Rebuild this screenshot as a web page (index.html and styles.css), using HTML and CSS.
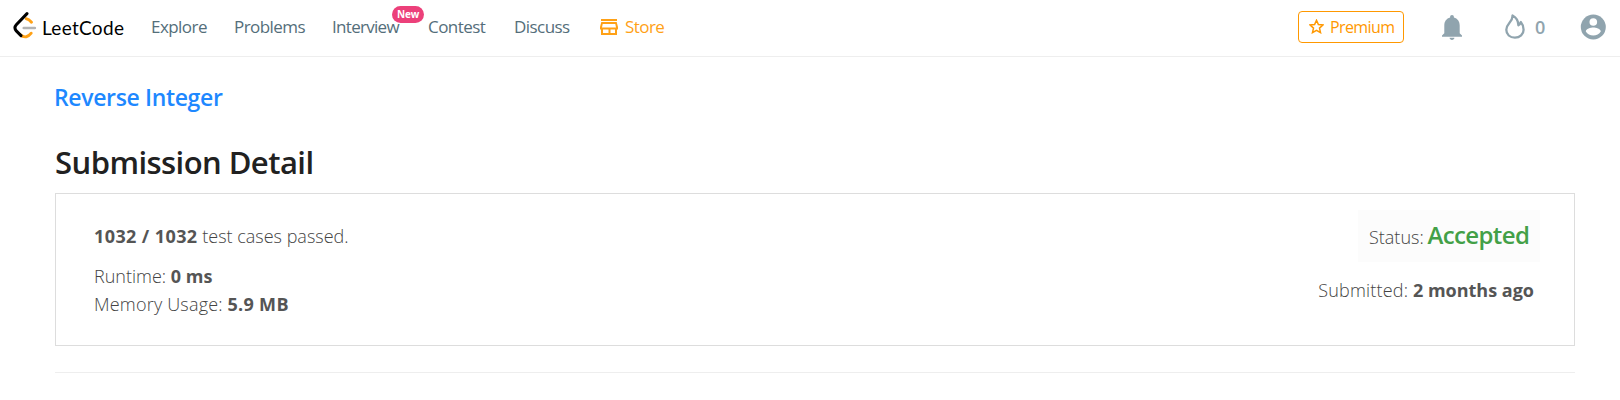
FILE: index.html
```html
<!DOCTYPE html>
<html lang="en">
<head>
<meta charset="utf-8">
<title>Submission Detail - LeetCode</title>
<link rel="stylesheet" href="styles.css">
</head>
<body>
<header class="navbar">
  <a class="brand">
    <svg class="brand-mark" width="24" height="28" viewBox="0 0 24 28" fill="none" stroke-linecap="round">
      <path d="M13.300 7.800c2.200.3 3.700 1.700 5.200 3.400M18.200 22.200c-2.800 3.700-6.800 5.200-11 1.500" stroke="#ffa116" stroke-width="2.900"/>
      <path d="M10.800 17h11" stroke="#b3b3b3" stroke-width="2.700"/>
      <path d="M14 2.600L3.300 13.800c-1.700 1.900-1.700 4.200 0 6.100l4.700 4.700" stroke="#000" stroke-width="3"/>
    </svg>
    <span class="brand-name">LeetCode</span>
  </a>
  <nav class="links">
    <a class="link explore">Explore</a>
    <a class="link problems">Problems</a>
    <a class="link interview">Interview<span class="badge">New</span></a>
    <a class="link contest">Contest</a>
    <a class="link discuss">Discuss</a>
    <a class="link store">
      <svg width="18" height="17" viewBox="0 0 18 17" fill="#ffa116" fill-rule="evenodd"><path d="M1 0h16v2H1zM1.300 3h15.400L18 8v2.500h-1V16H1v-5.500H0V8zM2.700 5L2 8.500h14L15.300 5zM3 10.500V14h5.500v-3.500zM10.500 10.500V14H15v-3.500z"/></svg>
      <span class="store-text">Store</span>
    </a>
  </nav>
  <div class="actions">
    <a class="premium">
      <svg width="15" height="15" viewBox="0 0 15 15" fill="none" stroke="#ff9800" stroke-width="1.500"><path d="M7.500 1.300l1.900 4.200 4.500.5-3.400 3.100 1 4.500-4-2.300-4 2.300 1-4.500L1.100 6l4.500-.5z"/></svg>
      <span class="premium-text">Premium</span>
    </a>
    <svg class="bell" width="20" height="25" viewBox="0 0 20 25" fill="#90a4ae"><path d="M10 0c1.200 0 1.900.8 1.900 1.900v.7c3.700 1 5.800 4 5.800 7.800v7.800l2.300 2.300v1.300H0v-1.300l2.300-2.300v-7.800c0-3.800 2.100-6.800 5.800-7.800v-.7C8.100.8 8.800 0 10 0zM7.600 22.800h4.800c0 1.300-1.100 2.200-2.400 2.200s-2.400-.9-2.400-2.200z"/></svg>
    <svg class="flame" width="20" height="25" viewBox="0 0 20 25" fill="none" stroke="#90a4ae" stroke-width="2.300" stroke-linejoin="round"><path d="M7.500 1.500c.2 3-1 4.900-3 7.200-2 2.400-3.200 4.400-3.200 7.100 0 4.700 3.600 7.900 8.600 7.900s8.700-3.300 8.700-8c0-3-1-5.600-2.800-7.700-.4 1.600-1.100 2.600-2.400 3.300C13.300 7 11.300 3.500 7.500 1.500z"/></svg>
    <span class="streak">0</span>
    <svg class="avatar" width="26" height="26" viewBox="0 0 26 26"><circle cx="13.300" cy="13" r="12.500" fill="#90a4ae"/><circle cx="13.300" cy="8" r="3.800" fill="#fff"/><path d="M5.800 17.500c0-2.500 5-3.900 7.500-3.900s7.500 1.400 7.500 3.900c-1.600 2.500-4.300 4.100-7.500 4.100s-5.900-1.600-7.500-4.100z" fill="#fff"/></svg>
  </div>
</header>
<main class="content">
  <h4 class="problem">Reverse Integer</h4>
  <h2 class="title">Submission Detail</h2>
  <section class="panel">
    <div class="stats">
      <p class="cases"><b class="count">1032 / 1032</b> <span class="cases-text">test cases passed.</span></p>
      <p class="stat"><span class="runtime">Runtime:</span> <b>0 ms</b></p>
      <p class="stat"><span class="memory">Memory Usage:</span> <b class="size">5.9 MB</b></p>
    </div>
    <div class="result">
      <p class="status"><span>Status:</span> <strong class="accepted">Accepted</strong></p>
      <p class="submitted"><span class="submitted-label">Submitted:</span> <b>2 months ago</b></p>
    </div>
  </section>
  <hr class="rule">
</main>
</body>
</html>
```
FILE: styles.css
```css
* { box-sizing: border-box; }
body {
  margin: 0;
  background: #fff;
  color: #444;
  font-family: "Open Sans", "Noto Sans", sans-serif;
  font-size: 18px;
  font-weight: 300;
}
h2, h4, p { margin: 0; white-space: nowrap; }
b { color: #555; font-weight: 700; }
svg { display: block; flex: none; }

.navbar {
  display: flex;
  align-items: flex-start;
  height: 57px;
  border-bottom: 1px solid #eee;
}
.brand { display: flex; width: 151px; padding: 11px 0 0 13px; color: #000; }
.brand-name {
  margin: 3px 0 0 5px;
  font: 400 19px/28px Lato, sans-serif;
  letter-spacing: 0.3px;
}
.links { display: flex; color: #546e7a; font-size: 17px; font-weight: 400; line-height: 54px; }
.link { position: relative; flex: none; white-space: nowrap; letter-spacing: -0.55px; }
.explore { width: 83px; }
.problems { width: 98px; }
.interview { width: 96px; letter-spacing: -0.7px; }
.contest { width: 86px; }
.discuss { width: 86px; }
.store { display: flex; gap: 7px; color: #ffa116; }
.store svg { margin-top: 19px; }
.badge {
  position: absolute;
  left: 60px;
  top: 6px;
  width: 32px;
  height: 17px;
  border-radius: 9px;
  background: #ec407a;
  color: #fff;
  font-size: 10px;
  font-weight: 700;
  line-height: 17px;
  letter-spacing: -0.2px;
  text-align: center;
}
.actions { display: flex; margin-left: auto; padding-right: 14px; }
.premium {
  display: flex;
  gap: 6px;
  width: 106px;
  height: 32px;
  margin: 11px 38px 0 0;
  padding-left: 10px;
  border: 1px solid #ff9800;
  border-radius: 4px;
  color: #ff9800;
  font-size: 16px;
  font-weight: 400;
  line-height: 30px;
  letter-spacing: -0.6px;
}
.premium svg { margin-top: 7px; }
.bell { margin: 15px 43px 0 0; }
.flame { margin: 14px 10px 0 0; }
.streak { width: 45px; color: #90a4ae; font-size: 18px; font-weight: 600; line-height: 54px; }
.avatar { margin-top: 14px; }

.content { padding: 0 45px 0 55px; }
.problem {
  padding-top: 24px;
  color: #1e88ff;
  font-size: 23px;
  font-weight: 600;
  line-height: 33px;
  letter-spacing: -0.35px;
  text-indent: -1px;
}
.title {
  padding-top: 28px;
  color: #212121;
  font-size: 31px;
  font-weight: 600;
  line-height: 40px;
  letter-spacing: -0.55px;
}
.panel {
  display: flex;
  justify-content: space-between;
  height: 153px;
  margin-top: 11px;
  padding: 16px 34px 0 38px;
  border: 1px solid #ddd;
}
.cases { padding-top: 12px; line-height: 28px; }
.count { letter-spacing: 0.4px; }
.size { letter-spacing: 0.3px; }
.memory { letter-spacing: 0.2px; }
.stat { line-height: 28px; }
.cases + .stat { padding-top: 12px; }
.result { display: flex; flex-direction: column; align-items: flex-end; }
.status { width: 182px; height: 52px; padding-left: 11px; background: #fcfcfc; line-height: 50px; }
.accepted { margin-left: -1px; color: #43a047; font-size: 24px; font-weight: 600; letter-spacing: -0.6px; }
.submitted { padding: 14px 6px 0 0; line-height: 28px; }
.submitted-label { letter-spacing: 0.2px; }
.rule { height: 1px; margin: 26px 0 0; border: 0; background: #eee; }
```
